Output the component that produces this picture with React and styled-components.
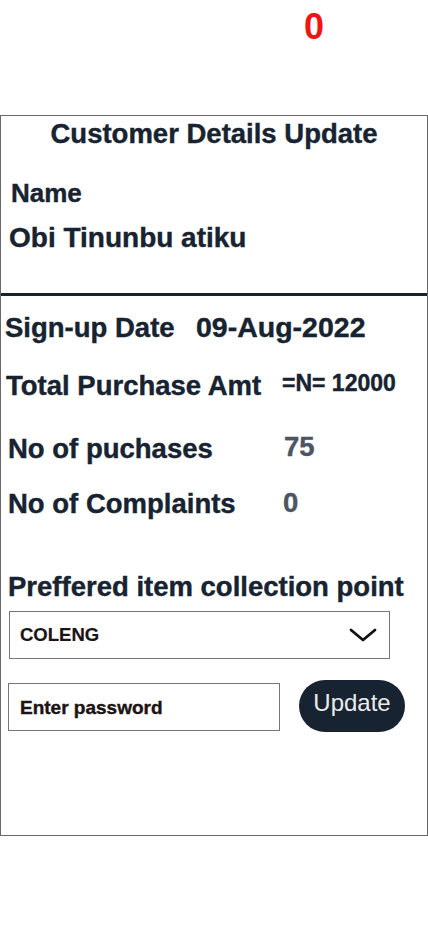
import React from "react";
import styled, { createGlobalStyle } from "styled-components";

const GlobalStyle = createGlobalStyle`
  body {
    margin: 0;
    background: #ffffff;
    font-family: "Liberation Sans", Arial, sans-serif;
  }
  * {
    box-sizing: border-box;
  }
`;

const App = () => {
  return (
    <Page>
      <GlobalStyle />
      <TopBar>
        <Counter>0</Counter>
      </TopBar>
      <Card>
        <Title>Customer Details Update</Title>
        <NameBlock>
          <NameLabel>Name</NameLabel>
          <NameValue>Obi Tinunbu atiku</NameValue>
        </NameBlock>
        <Divider />
        <Stats>
          <StatRow $top={18} $left={4} $labelWidth={191}>
            <Label>Sign-up Date</Label>
            <Value $size={28.5} $offset={-1}>09-Aug-2022</Value>
          </StatRow>
          <StatRow $top={30.5} $left={5} $labelWidth={276}>
            <Label>Total Purchase Amt</Label>
            <Value $size={23}>=N= 12000</Value>
          </StatRow>
          <StatRow $top={35.5} $left={7} $labelWidth={276}>
            <Label>No of puchases</Label>
            <Value $muted $offset={-2}>75</Value>
          </StatRow>
          <StatRow $top={27.5} $left={7} $labelWidth={275}>
            <Label>No of Complaints</Label>
            <Value $muted $offset={-1}>0</Value>
          </StatRow>
        </Stats>
        <CollectionLabel>Preffered item collection point</CollectionLabel>
        <Select>
          <span>COLENG</span>
          <svg width="28" height="16" viewBox="0 0 28 16" fill="none">
            <path
              d="M2 3 L14 13 L26 3"
              stroke="#111111"
              strokeWidth="2.8"
              strokeLinecap="round"
              strokeLinejoin="round"
            />
          </svg>
        </Select>
        <ActionRow>
          <PasswordInput placeholder="Enter password" type="password" />
          <UpdateButton>Update</UpdateButton>
        </ActionRow>
      </Card>
    </Page>
  );
};

const Page = styled.div`
  width: 428px;
  min-height: 926px;
`;

const TopBar = styled.div`
  height: 115px;
  display: flex;
  justify-content: flex-end;
  padding: 9px 104px 0 0;
`;

const Counter = styled.div`
  font-size: 36px;
  line-height: 1;
  font-weight: 700;
  color: #f01414;
`;

const Card = styled.div`
  width: 428px;
  height: 721px;
  border: 1px solid #686868;
  color: #172330;
  font-weight: 700;
  -webkit-text-stroke: 0.4px currentColor;
`;

const Title = styled.h1`
  margin: 0;
  padding-top: 4px;
  font-size: 27.5px;
  line-height: 1;
  text-align: center;
`;

const NameBlock = styled.div`
  display: flex;
  flex-direction: column;
  padding-top: 32px;
  height: 145px;
`;

const NameLabel = styled.div`
  font-size: 26px;
  line-height: 1;
  padding-left: 10px;
`;

const NameValue = styled.div`
  font-size: 28px;
  line-height: 1;
  padding-left: 8px;
  margin-top: 18px;
`;

const Divider = styled.div`
  height: 3px;
  background: #172330;
`;

const Stats = styled.div`
  display: flex;
  flex-direction: column;
`;

const StatRow = styled.div`
  display: grid;
  grid-template-columns: ${(p) => p.$labelWidth}px auto;
  align-items: start;
  height: 27.5px;
  margin-top: ${(p) => p.$top}px;
  padding-left: ${(p) => p.$left}px;
`;

const Label = styled.span`
  font-size: 27.5px;
  line-height: 1;
  white-space: nowrap;
`;

const Value = styled.span`
  font-size: ${(p) => p.$size || 27.5}px;
  line-height: 1;
  margin-top: ${(p) => p.$offset || 0}px;
  color: ${(p) => (p.$muted ? "#4b5563" : "#172330")};
  white-space: nowrap;
`;

const CollectionLabel = styled.div`
  font-size: 27.5px;
  line-height: 1;
  padding-left: 7px;
  margin-top: 56px;
  white-space: nowrap;
`;

const Select = styled.div`
  width: 381px;
  height: 48px;
  margin: 10px 0 0 8px;
  border: 1px solid #777777;
  display: flex;
  align-items: center;
  justify-content: space-between;
  padding: 0 12px 0 10px;
  font-size: 18.5px;
  color: #1c1414;
  -webkit-text-stroke: 0.2px currentColor;

  span {
    margin-top: 1px;
  }
`;

const ActionRow = styled.div`
  display: flex;
  align-items: center;
  margin-top: 21px;
  padding-left: 7px;
`;

const PasswordInput = styled.input`
  width: 272px;
  height: 48px;
  margin-top: 3px;
  border: 1px solid #777777;
  border-radius: 0;
  padding: 2px 0 0 11px;
  font-family: "Liberation Sans", Arial, sans-serif;
  font-size: 19px;
  font-weight: 700;
  color: #1c1414;
  outline: none;

  &::placeholder {
    color: #1c1414;
    opacity: 1;
  }
`;

const UpdateButton = styled.button`
  width: 106px;
  height: 52px;
  margin-left: 19px;
  border: none;
  border-radius: 26px;
  background: #172330;
  color: #ececec;
  font-family: "Liberation Sans", Arial, sans-serif;
  font-size: 24px;
  font-weight: 400;
  padding: 0 0 5px;
  -webkit-text-stroke: 0;
  cursor: pointer;
`;

export default App;
